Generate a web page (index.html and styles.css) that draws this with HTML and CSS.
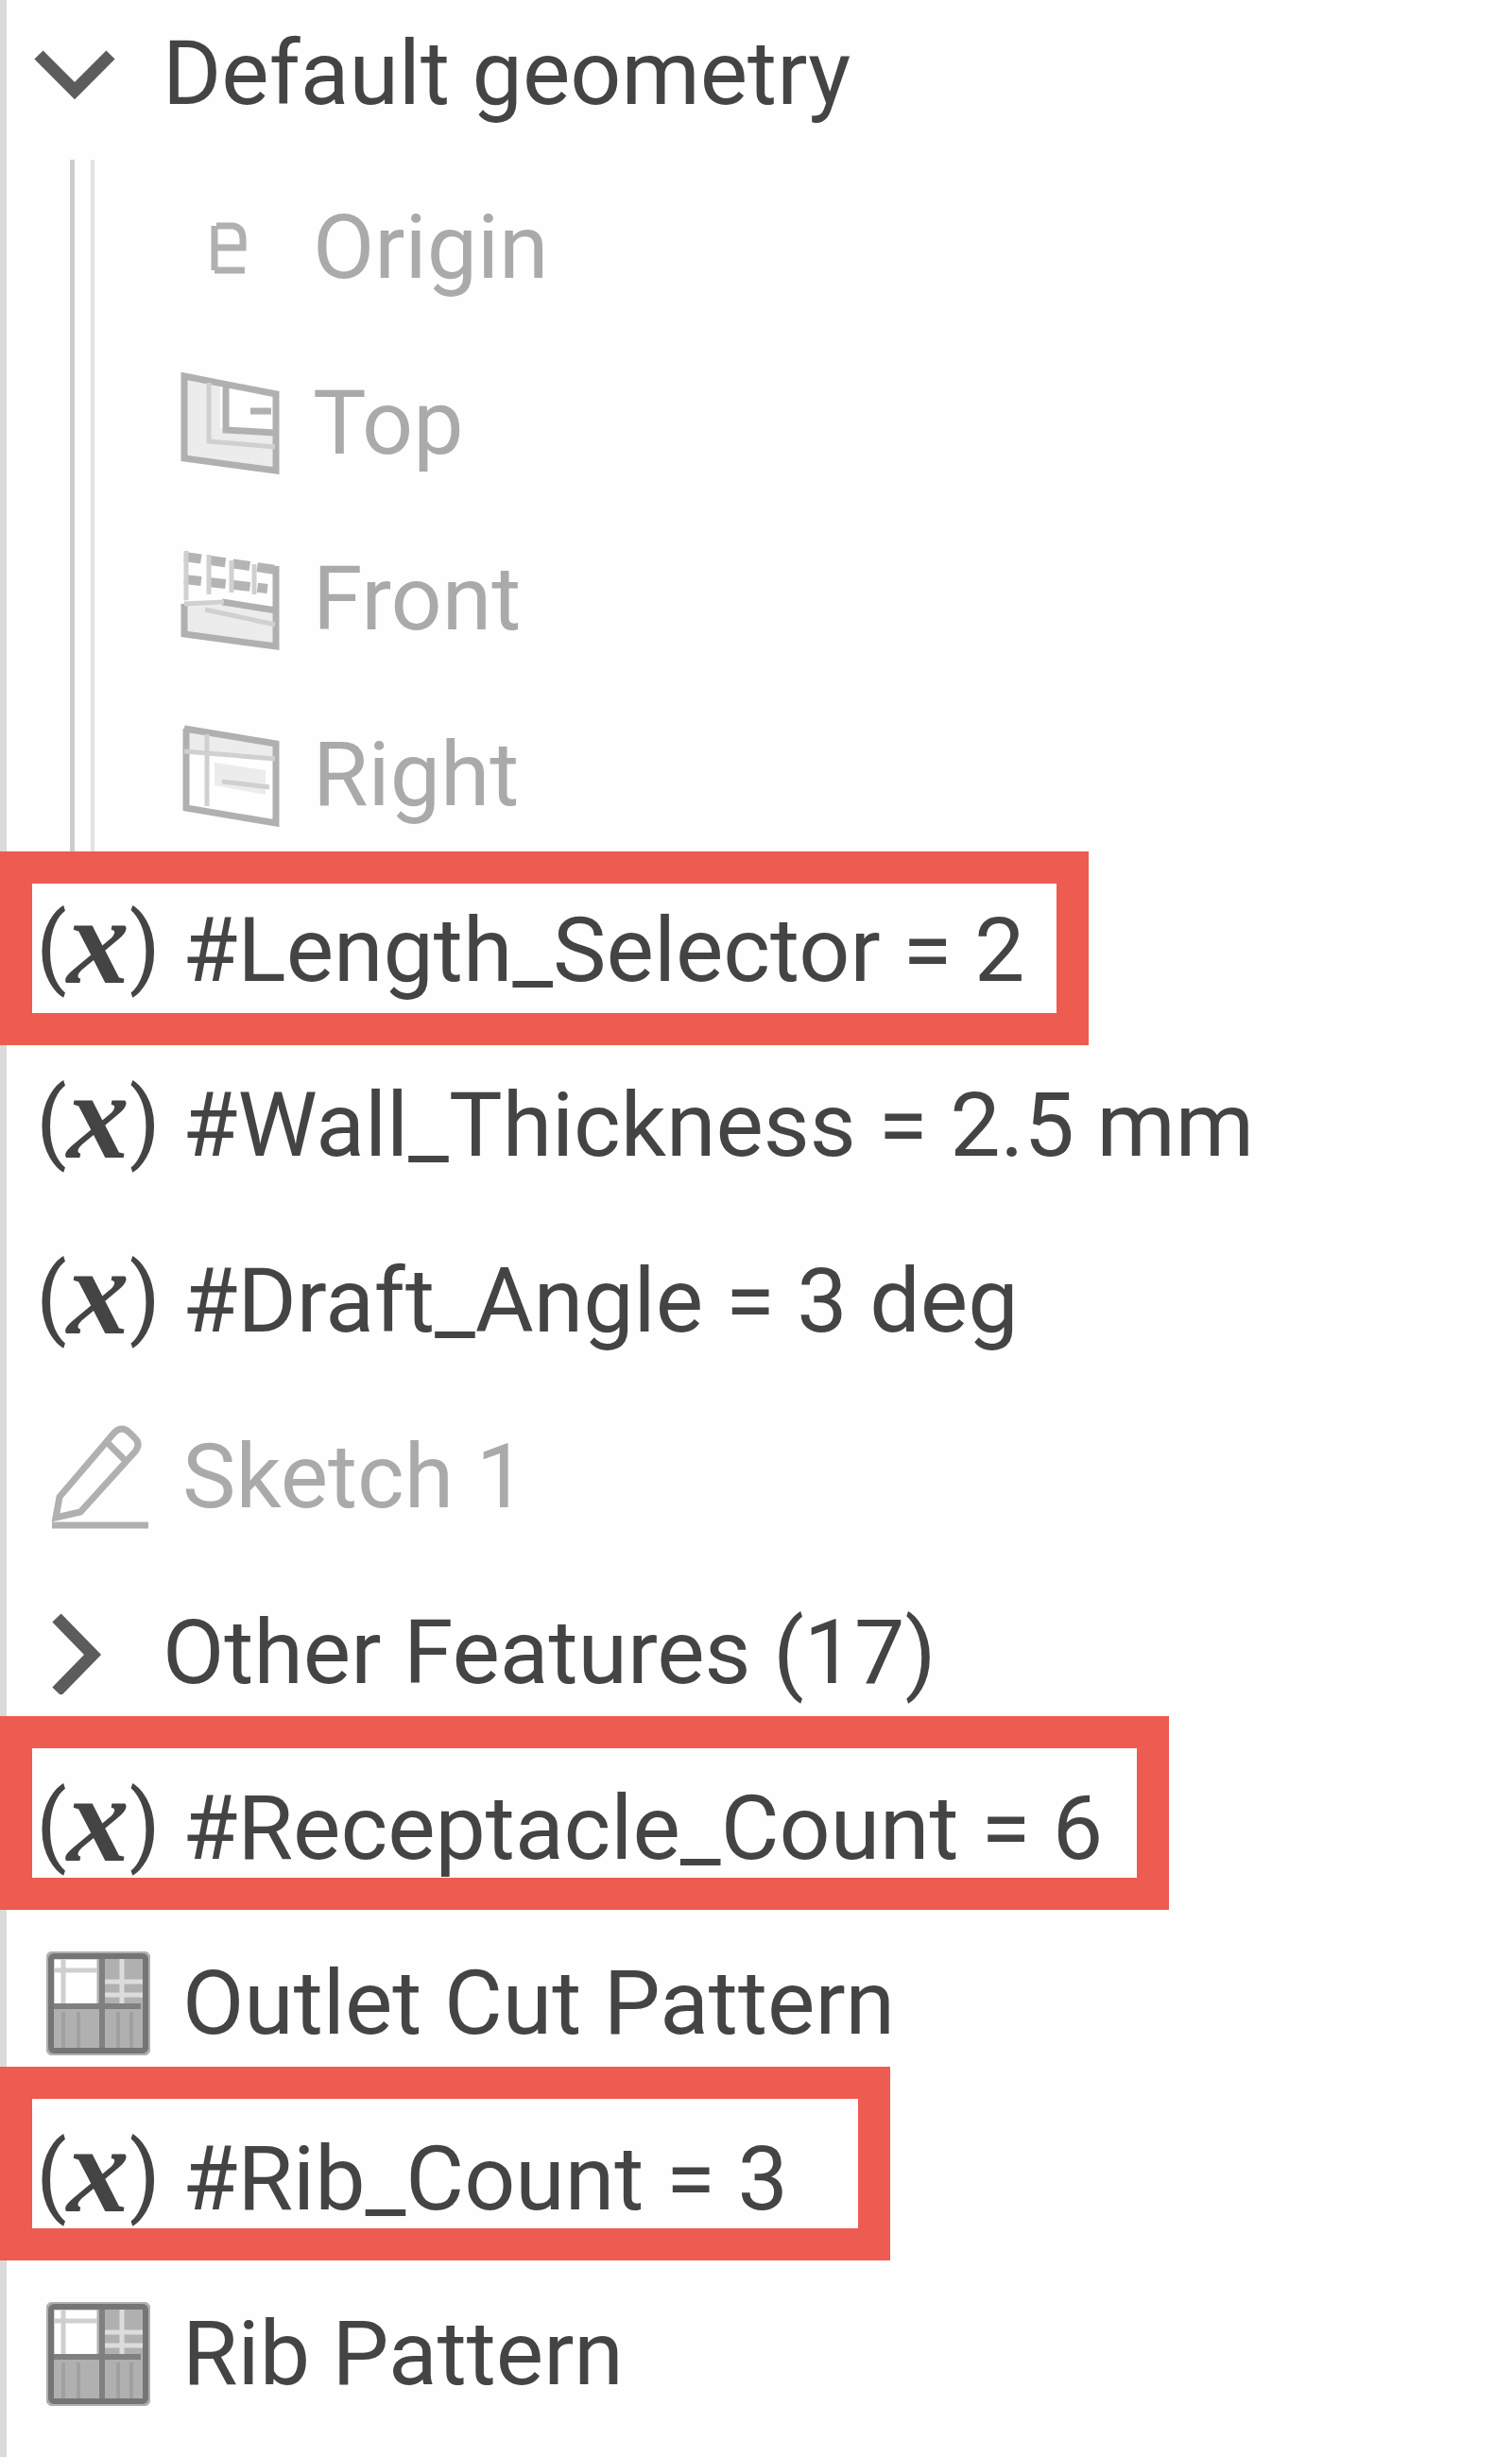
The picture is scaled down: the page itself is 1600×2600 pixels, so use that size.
FILE: index.html
```html
<!DOCTYPE html>
<html lang="en">
<head>
<meta charset="utf-8">
<title>Feature list</title>
<link rel="stylesheet" href="styles.css">
</head>
<body>
<svg class="defs" aria-hidden="true">
  <symbol id="pattern" viewBox="0 0 110 110">
    <rect x="3" y="3" width="104" height="104" rx="4" fill="#b0b0b0"/>
    <rect x="5" y="5" width="52" height="54" fill="#fff"/>
    <path d="M8 20H54M18 8V56" stroke="#cfcfcf" stroke-width="5"/>
    <path d="M62 32H104M62 46H104M80 8V58" stroke="#dcdcdc" stroke-width="5"/>
    <path d="M18 64V102M34 64V102M76 64V102M90 64V102" stroke="#a0a0a0" stroke-width="4"/>
    <path d="M5 58H100M59 5V104" stroke="#808080" stroke-width="6"/>
    <rect x="5" y="5" width="100" height="100" rx="3" fill="none" stroke="#757575" stroke-width="6"/>
  </symbol>
</svg>
<main class="panel">
  <ul class="tree">
    <li>
      <button class="row group first" type="button" aria-expanded="true">
        <svg class="chevron" viewBox="0 0 88 88"><path d="M7 24L45 62L83 24"/></svg>
        <span>Default geometry</span>
      </button>
      <ul class="children">
        <li class="row"><span class="icon origin"><svg viewBox="0 0 110 110"><path d="M42 32H60Q70 34 70 46V55H40M72 79H40M40 79V32"/></svg></span><span>Origin</span></li>
        <li class="row"><span class="icon"><svg viewBox="0 0 110 110"><path class="shade" d="M8 5L46 12V60L105 68V106L8 92Z"/><path d="M8 5L105 24V105L8 92ZM52 14V62L104 65M78 42L100 42"/><path class="thin" d="M34 12V74L104 80"/></svg></span><span>Top</span></li>
        <li class="row"><span class="icon"><svg viewBox="0 0 110 110"><path class="shade" d="M8 56L105 70V106L8 92Z"/><path d="M105 20V105L8 92V60M48 58L105 67"/><path class="dots" d="M8 10L105 24M8 34L96 44"/><path class="thin" d="M10 4V56M34 8V50M58 14V48M82 18V50M30 66L104 82M8 60L50 58"/></svg></span><span>Front</span></li>
        <li class="row"><span class="icon"><svg viewBox="0 0 110 110"><path class="shade" d="M8 6L105 22V40L8 28ZM40 42L94 50V76L40 66Z"/><path d="M8 6L105 22V106L10 90V6"/><path class="thin" d="M8 30L104 38M32 12V88M48 62L98 68"/></svg></span><span>Right</span></li>
      </ul>
    </li>
    <li class="row marked length"><span class="icon var">(<i>x</i>)</span><span>#Length_Selector = 2</span></li>
    <li class="row"><span class="icon var">(<i>x</i>)</span><span>#Wall_Thickness = 2.5 mm</span></li>
    <li class="row"><span class="icon var">(<i>x</i>)</span><span>#Draft_Angle = 3 deg</span></li>
    <li class="row muted"><span class="icon"><svg viewBox="0 0 110 110"><path d="M14 76L72 8Q80 0 88 8L94 14Q100 20 94 28L36 92L10 98ZM64 18L84 38M6 106H108"/></svg></span><span>Sketch 1</span></li>
    <li>
      <button class="row group" type="button" aria-expanded="false">
        <svg class="chevron" viewBox="0 0 88 88"><path d="M26 7L64 46L26 85"/></svg>
        <span>Other Features (17)</span>
      </button>
    </li>
    <li class="row marked receptacle"><span class="icon var">(<i>x</i>)</span><span>#Receptacle_Count = 6</span></li>
    <li class="row"><span class="icon"><svg><use href="#pattern"/></svg></span><span>Outlet Cut Pattern</span></li>
    <li class="row marked rib"><span class="icon var">(<i>x</i>)</span><span>#Rib_Count = 3</span></li>
    <li class="row"><span class="icon"><svg><use href="#pattern"/></svg></span><span>Rib Pattern</span></li>
  </ul>
</main>
</body>
</html>
```
FILE: styles.css
```css
*, *::before { box-sizing: border-box; }
body {
  margin: 0;
  background: #fefefe;
  color: #444;
  font: 95px/120px Roboto, "Liberation Sans", sans-serif;
}
.defs { position: absolute; width: 0; height: 0; }
.panel {
  min-height: 100vh;
  border-left: 7px solid #dadada;
}
.tree, .children { list-style: none; margin: 0; padding: 0; }
.row {
  display: flex;
  align-items: center;
  gap: 34px;
  height: 186px;
  padding-left: 42px;
  white-space: nowrap;
}
.group {
  width: 100%;
  gap: 50px;
  padding: 0 0 0 27px;
  border: 0;
  background: none;
  color: inherit;
  font: inherit;
  text-align: left;
}
.first { height: 156px; margin-bottom: 13px; }
.chevron {
  width: 88px;
  height: 88px;
  fill: none;
  stroke: #5c5c5c;
  stroke-width: 13px;
}
.children {
  margin-left: 67px;
  border-left: 5px solid #cdcdcd;
  color: #aaa;
  position: relative;
}
.children::before {
  content: "";
  position: absolute;
  inset: 0 auto 0 17px;
  width: 4px;
  background: #e2e2e2;
}
.children .row { padding-left: 108px; }
.icon { flex: none; width: 110px; height: 110px; }
.icon svg {
  display: block;
  width: 100%;
  height: 100%;
  fill: none;
  stroke: #b0b0b0;
  stroke-width: 7px;
}
.icon .shade { fill: #ececec; stroke: none; }
.icon .thin { stroke: #d0d0d0; stroke-width: 5px; }
.icon .dots { stroke: #b4b4b4; stroke-width: 10px; stroke-dasharray: 18px 8px; }
.muted { color: #aaa; }
.var {
  display: flex;
  justify-content: center;
  width: 130px;
  margin: 0 -10px;
  line-height: 102px;
}
.var i {
  font: italic bold 132px/90px "Liberation Serif", serif;
}

/* Red frames drawn over the driving variables */
.marked { position: relative; height: 185px; }
.marked::before {
  content: "";
  position: absolute;
  top: -26px;
  left: -7px;
  height: 205px;
  border: 34px solid #ee5b50;
}
.length::before { top: -12px; width: 1152px; }
.receptacle::before { width: 1237px; }
.rib::before { width: 942px; }
```
